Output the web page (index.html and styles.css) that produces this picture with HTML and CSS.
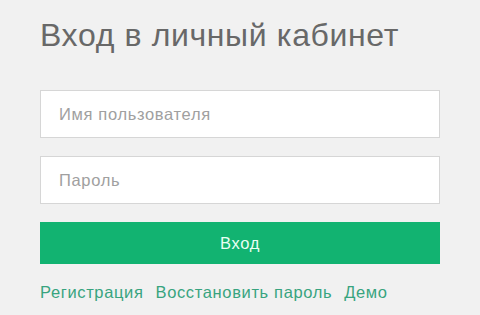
FILE: index.html
```html
<!DOCTYPE html>
<html lang="ru">
<head>
<meta charset="utf-8">
<title>Вход в личный кабинет</title>
<link rel="stylesheet" href="styles.css">
</head>
<body>
<main class="login">
  <h1 class="login-title">Вход в личный кабинет</h1>
  <form class="login-form">
    <input class="field" type="text" placeholder="Имя пользователя">
    <input class="field" type="password" placeholder="Пароль">
    <button class="submit" type="button">Вход</button>
  </form>
  <nav class="links">
    <a href="#">Регистрация</a>
    <a href="#">Восстановить пароль</a>
    <a href="#">Демо</a>
  </nav>
</main>
</body>
</html>
```

FILE: styles.css
```css
html, body {
  margin: 0;
  padding: 0;
  background: #f1f1f1;
}
body {
  font-family: "Liberation Sans", Arial, sans-serif;
  letter-spacing: 0.04em;
}
.login {
  width: 400px;
  padding: 14px 0 0 40px;
}
.login-title {
  margin: 0;
  font-size: 32px;
  font-weight: normal;
  color: #686868;
  line-height: 42px;
}
.login-form {
  display: flex;
  flex-direction: column;
  margin-top: 34px;
}
.field {
  box-sizing: border-box;
  width: 400px;
  height: 48px;
  margin: 0 0 18px;
  padding: 0 18px;
  border: 1px solid #d6d6d6;
  background: #ffffff;
  font-family: inherit;
  font-size: 16.5px;
  letter-spacing: 0.04em;
  color: #333;
  outline: none;
}
.field::placeholder {
  color: #a0a0a0;
}
.submit {
  box-sizing: border-box;
  width: 400px;
  height: 42px;
  border: 0;
  background: #12b371;
  color: #e9fff4;
  font-family: inherit;
  font-size: 16.5px;
  letter-spacing: 0.04em;
  cursor: pointer;
}
.links {
  display: flex;
  gap: 12px;
  margin-top: 19px;
}
.links a {
  color: #38a47f;
  text-decoration: none;
  font-size: 16.5px;
}
```
